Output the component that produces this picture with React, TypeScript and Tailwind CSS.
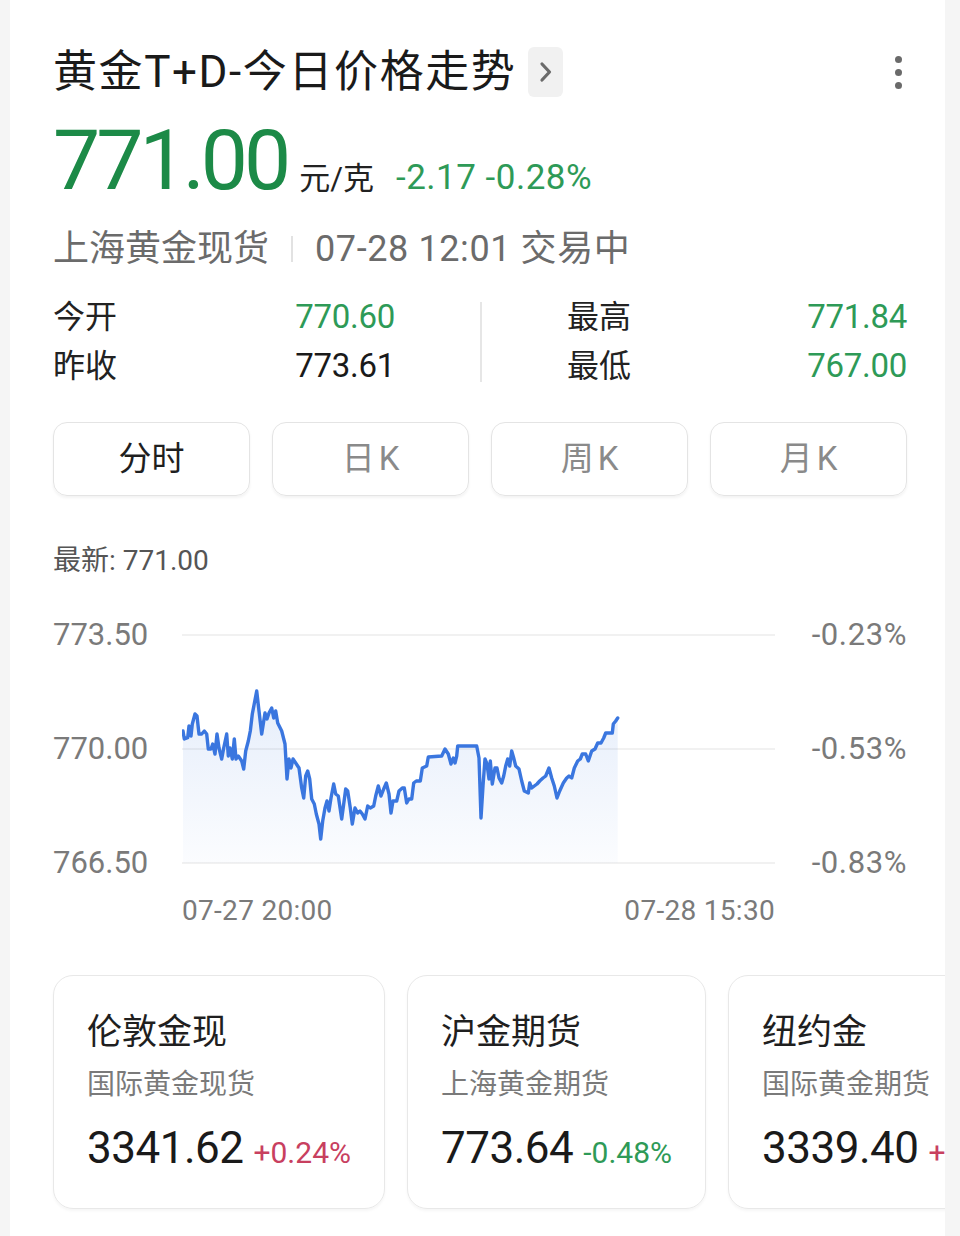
import React from 'react';

const font = { fontFamily: "Roboto, 'Noto Sans CJK SC', sans-serif" };

// price line, traced in page coordinates (viewBox matches the page)
const points: [number, number][] = [
  [183, 730], [184.3, 738], [187.7, 736.7], [189, 725], [191, 735], [192.3, 723], [195, 713], [197, 715],
  [199, 733], [201.7, 733], [204.3, 730], [206.7, 733], [208.3, 748], [211, 748], [212.7, 743], [215, 753],
  [217, 733], [219, 747], [221.7, 758], [223.7, 747], [226.7, 733], [228.3, 755], [230, 747], [232.3, 758],
  [234.3, 738], [236, 758], [238.3, 755], [241.7, 760], [243.7, 768], [245.7, 750], [248.3, 740], [250.3, 730],
  [252.3, 713], [256.7, 690], [259, 710], [261.7, 733], [265, 712], [267, 718], [269, 712], [271.7, 707],
  [273.7, 717], [275.7, 710], [277.7, 722], [281.7, 730], [285, 743], [287, 778], [289, 758], [291, 767],
  [293, 758], [295.7, 762], [299, 767], [301.7, 787], [303.7, 797], [305.7, 775], [307.7, 770], [309.7, 778],
  [311.7, 798], [314.3, 803], [316.3, 813], [319, 823], [320.7, 838], [322.7, 820], [325, 807], [327, 800],
  [329, 810], [331, 797], [333.7, 783], [335.7, 793], [338.3, 795], [341.7, 818], [343.7, 803], [345.7, 788],
  [347.7, 790], [350.3, 807], [352.3, 823], [355, 807], [357.7, 812], [360, 810], [362.3, 813], [365, 818],
  [367.7, 805], [370.3, 807], [373.7, 805], [375.7, 795], [378.3, 785], [381, 795], [383.7, 788], [386.3, 782],
  [389, 793], [391, 812], [393, 800], [396.7, 800], [399, 790], [402.3, 787], [404.3, 787], [406.7, 802],
  [409, 798], [411.7, 798], [413.7, 782], [416.3, 780], [420.3, 780], [422.3, 767], [426.7, 765], [428.3, 756],
  [441.7, 755], [445, 748], [448.3, 753], [451, 763], [453.3, 757], [455, 762], [456.7, 755], [457.7, 745],
  [476.7, 745], [479, 757], [481, 817], [483, 785], [485, 758], [487, 763], [489, 778], [490.3, 760],
  [492.3, 783], [495, 767], [497, 767], [499, 777], [501.7, 782], [503.7, 775], [505.7, 765], [507.7, 758],
  [509.7, 765], [511.7, 750], [513.7, 757], [515.7, 765], [519, 768], [521.7, 780], [524.3, 790], [528.3, 792],
  [529.7, 782], [531.7, 787], [534.3, 785], [537, 783], [539.7, 780], [543, 777], [545.7, 775], [549, 767],
  [551.7, 777], [554.3, 785], [557, 797], [559.7, 790], [563.3, 782], [566.7, 777], [569, 775], [571.7, 777],
  [574.3, 767], [577.7, 760], [580.3, 758], [582.3, 753], [585.7, 753], [588.3, 760], [591.7, 750], [595, 748],
  [597.7, 742], [601, 742], [603.7, 737], [605.7, 732], [612.3, 732], [613.3, 723], [615.7, 720], [617.7, 717],
];

const linePath = points.map(([x, y], i) => `${i === 0 ? 'M' : 'L'}${x} ${y}`).join(' ');
const areaPath = `${linePath} L617.7 862 L183 862 Z`;

function PriceChart() {
  return (
    <svg width={593} height={262} viewBox="182 617 593 262" className="shrink-0">
      <defs>
        <linearGradient id="area" x1="0" y1="0" x2="0" y2="1">
          <stop offset="0%" stopColor="#3b78de" stopOpacity="0.13" />
          <stop offset="100%" stopColor="#3b78de" stopOpacity="0.02" />
        </linearGradient>
      </defs>
      {[634, 748, 862].map((y) => (
        <line key={y} x1={182} x2={775} y1={y} y2={y} stroke="#ececec" strokeWidth={1.5} />
      ))}
      <path d={areaPath} fill="url(#area)" />
      <path d={linePath} fill="none" stroke="#3a76df" strokeWidth={3.4} strokeLinejoin="round" strokeLinecap="round" />
    </svg>
  );
}

const markets = [
  { name: '伦敦金现', sub: '国际黄金现货', price: '3341.62', change: '+0.24%', up: true },
  { name: '沪金期货', sub: '上海黄金期货', price: '773.64', change: '-0.48%', up: false },
  { name: '纽约金', sub: '国际黄金期货', price: '3339.40', change: '+0.18%', up: true },
];

export default function App() {
  return (
    <div className="min-h-[1236px] bg-[#f5f5f5]" style={font}>
      <div className="ml-[10px] h-[1236px] w-[935px] overflow-hidden bg-white pl-[43px] pr-[38px] pt-[47px]">
        {/* title */}
        <div className="flex h-[50px] items-center justify-between">
          <div className="flex items-center">
            <h1 className="text-[44px] leading-[50px] tracking-[1.6px] text-[#1a1a1a]">黄金T+D-今日价格走势</h1>
            <div className="ml-[12px] flex h-[50px] w-[35px] items-center justify-center rounded-[6px] bg-[#f1f1f1]">
              <svg width="14" height="22" viewBox="0 0 14 22">
                <path d="M3 3 L10.5 11 L3 19" fill="none" stroke="#6b6b6b" strokeWidth="3.2" strokeLinecap="round" strokeLinejoin="round" />
              </svg>
            </div>
          </div>
          <div className="mr-[5px] flex flex-col items-center gap-[6px]">
            <span className="h-[7px] w-[7px] rounded-full bg-[#6a6a6a]" />
            <span className="h-[7px] w-[7px] rounded-full bg-[#6a6a6a]" />
            <span className="h-[7px] w-[7px] rounded-full bg-[#6a6a6a]" />
          </div>
        </div>

        {/* price */}
        <div className="mt-[22px] flex items-baseline whitespace-nowrap">
          <span className="text-[84px] leading-[84px] tracking-[-4px] text-[#1c8a47]">771.00</span>
          <span className="ml-[12px] text-[31px] text-[#222]">元/克</span>
          <span className="ml-[22px] text-[35px] tracking-[0.5px] text-[#2e9a57]">-2.17 -0.28%</span>
        </div>

        {/* market + time */}
        <div className="mt-[24px] flex h-[40px] items-center text-[36px] text-[#6b6b6b]">
          <span>上海黄金现货</span>
          <span className="mx-[22px] h-[26px] w-[2px] bg-[#e2e2e2]" />
          <span className="tracking-[0.6px]">07-28 12:01 交易中</span>
        </div>

        {/* stats */}
        <div className="mt-[24px] flex items-center text-[32px]">
          <div className="w-[342px]">
            <div className="flex h-[49px] items-center justify-between">
              <span className="text-[#222]">今开</span>
              <span className="text-[33px] tracking-[-0.3px] text-[#2e9a57]">770.60</span>
            </div>
            <div className="flex h-[49px] items-center justify-between">
              <span className="text-[#222]">昨收</span>
              <span className="text-[33px] tracking-[-0.3px] text-[#1a1a1a]">773.61</span>
            </div>
          </div>
          <div className="mx-[85px] h-[80px] w-[2px] bg-[#e6e6e6]" />
          <div className="flex-1">
            <div className="flex h-[49px] items-center justify-between">
              <span className="text-[#222]">最高</span>
              <span className="text-[33px] tracking-[-0.3px] text-[#2e9a57]">771.84</span>
            </div>
            <div className="flex h-[49px] items-center justify-between">
              <span className="text-[#222]">最低</span>
              <span className="text-[33px] tracking-[-0.3px] text-[#2e9a57]">767.00</span>
            </div>
          </div>
        </div>

        {/* tabs */}
        <div className="mt-[31px] grid grid-cols-4 gap-[22px]">
          {['分时', '日K', '周K', '月K'].map((t, i) => (
            <div
              key={t}
              className={`flex h-[74px] items-center justify-center rounded-[14px] border border-[#e4e4e4] text-[33px] shadow-[0_2px_3px_rgba(0,0,0,0.05)] ${
                i === 0 ? 'text-[#1f1f1f]' : 'text-[#8a8a8a]'
              }`}
            >
              {i === 0 ? t : <span>{t[0]}<span className="ml-[4px]">{t[1]}</span></span>}
            </div>
          ))}
        </div>

        {/* latest */}
        <div className="mt-[47px] text-[28px] leading-[36px] text-[#555]">最新: 771.00</div>

        {/* chart */}
        <div className="mt-[39px] flex">
          <div className="flex w-[129px] flex-col justify-between text-[31px] leading-[34px] text-[#7a7a7a]">
            <span>773.50</span>
            <span>770.00</span>
            <span>766.50</span>
          </div>
          <PriceChart />
          <div className="flex flex-1 flex-col items-end justify-between text-[31px] leading-[34px] tracking-[0.6px] text-[#7a7a7a]">
            <span>-0.23%</span>
            <span>-0.53%</span>
            <span>-0.83%</span>
          </div>
        </div>
        <div className="ml-[129px] mt-[13px] flex w-[593px] justify-between text-[28px] leading-[36px] tracking-[0.3px] text-[#7a7a7a]">
          <span>07-27 20:00</span>
          <span>07-28 15:30</span>
        </div>

        {/* related markets */}
        <div className="mt-[46px] flex gap-[22px]">
          {markets.map((m) => (
            <div
              key={m.name}
              className="shrink-0 whitespace-nowrap rounded-[20px] border border-[#e8e8e8] px-[33px] pb-[27px] pt-[35px] shadow-[0_2px_3px_rgba(0,0,0,0.04)]"
            >
              <div className="text-[35px] leading-[44px] text-[#1f1f1f]">{m.name}</div>
              <div className="mt-[12px] text-[28px] leading-[36px] text-[#7a7a7a]">{m.sub}</div>
              <div className="mt-[17px] flex items-baseline leading-[56px]">
                <span className="text-[44px] tracking-[-0.5px] text-[#1a1a1a]">{m.price}</span>
                <span className={`ml-[10px] text-[30px] ${m.up ? 'text-[#c8405f]' : 'text-[#2e9a57]'}`}>{m.change}</span>
              </div>
            </div>
          ))}
        </div>
      </div>
    </div>
  );
}
